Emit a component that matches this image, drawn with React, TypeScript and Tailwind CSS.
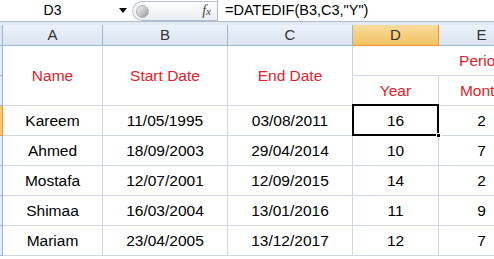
import React from "react";

const rows = [
  ["Kareem", "11/05/1995", "03/08/2011", "16", "2"],
  ["Ahmed", "18/09/2003", "29/04/2014", "10", "7"],
  ["Mostafa", "12/07/2001", "12/09/2015", "14", "2"],
  ["Shimaa", "16/03/2004", "13/01/2016", "11", "9"],
  ["Mariam", "23/04/2005", "13/12/2017", "12", "7"],
];

const cell = "flex items-center justify-center border-r border-b border-[#d0d7e5] bg-white";
const colHead =
  "flex items-center justify-center border-r border-b border-[#9eb6ce] bg-gradient-to-b from-[#eaf1fa] to-[#dbe5f1] text-[#333] text-[15px]";

const App: React.FC = () => {
  return (
    <div className="w-[494px] h-[259px] overflow-hidden bg-white font-['Liberation_Sans',Arial,sans-serif]">
      {/* Formula bar */}
      <div className="flex h-[22px] border-b border-[#abbbd0] bg-white">
        <div className="w-[130px] flex items-center">
          <span className="w-[105px] text-center text-[14px] text-black">D3</span>
          <span className="ml-auto mr-[3px] w-0 h-0 border-l-[4px] border-r-[4px] border-t-[5px] border-l-transparent border-r-transparent border-t-black" />
        </div>
        <div className="ml-[2px] w-[85px] mt-[1px] h-[20px] flex items-center rounded-l-full border border-r-0 border-[#b5c1d0] bg-gradient-to-b from-[#fdfdfd] to-[#e9edf2]">
          <span className="ml-[3px] w-[13px] h-[13px] rounded-full bg-gradient-to-br from-[#f2f2f2] via-[#c8c8c8] to-[#9a9a9a] border border-[#b0b0b0]" />
          <span className="ml-auto mr-[6px] italic font-['Liberation_Serif',serif] text-[14px] text-[#444] leading-none">
            f<span className="text-[11px]">x</span>
          </span>
        </div>
        <div className="flex-1 flex items-center border-l border-[#abbbd0] pl-[7px] text-[14.5px] text-black">
          =DATEDIF(B3,C3,"Y")
        </div>
      </div>
      <div className="h-[3px] bg-[#e4eaf2]" />

      {/* Sheet grid */}
      <div className="grid grid-cols-[3px_100px_125px_125px_86px_86px_86px] grid-rows-[21px_repeat(7,30px)] text-[15.5px] text-black">
        <div className="border-r border-b border-[#9eb6ce] bg-[#dbe5f1]" />
        <div className={colHead}>A</div>
        <div className={colHead}>B</div>
        <div className={colHead}>C</div>
        <div className="flex items-center justify-center border-r border-b border-[#f29436] bg-gradient-to-b from-[#f9dc9c] to-[#f2c261] text-[#333] text-[15px]">
          D
        </div>
        <div className={colHead}>E</div>
        <div className={colHead}>F</div>

        {/* Header rows 1-2 */}
        <div className="row-span-2 flex flex-col">
          <div className="flex-1 border-r border-b border-[#9eb6ce] bg-[#e4ecf7]" />
          <div className="flex-1 border-r border-b border-[#9eb6ce] bg-[#e4ecf7]" />
        </div>
        <div className={`${cell} row-span-2 text-[#e3212a]`}>Name</div>
        <div className={`${cell} row-span-2 text-[#e3212a]`}>Start Date</div>
        <div className={`${cell} row-span-2 text-[#e3212a]`}>End Date</div>
        <div className={`${cell} col-span-3 text-[#e3212a]`}>Period</div>
        <div className={`${cell} text-[#e3212a]`}>Year</div>
        <div className={`${cell} text-[#e3212a]`}>Month</div>
        <div className={`${cell} text-[#e3212a]`}>Day</div>

        {rows.map((r, i) => (
          <React.Fragment key={r[0]}>
            <div
              className={
                i === 0
                  ? "border-r border-b border-[#f29436] bg-[#f5c872]"
                  : "border-r border-b border-[#9eb6ce] bg-[#e4ecf7]"
              }
            />
            <div className={cell}>{r[0]}</div>
            <div className={cell}>{r[1]}</div>
            <div className={cell}>{r[2]}</div>
            {i === 0 ? (
              <div className="relative flex items-center justify-center bg-white border-r border-b border-[#d0d7e5]">
                <div className="absolute -left-[1px] -top-[2px] right-[-1px] bottom-[-1px] border-2 border-black" />
                <div className="absolute right-[-3px] bottom-[-3px] w-[5px] h-[5px] bg-black border border-white" />
                {r[3]}
              </div>
            ) : (
              <div className={cell}>{r[3]}</div>
            )}
            <div className={cell}>{r[4]}</div>
            <div className={cell} />
          </React.Fragment>
        ))}
      </div>
    </div>
  );
};

export default App;
